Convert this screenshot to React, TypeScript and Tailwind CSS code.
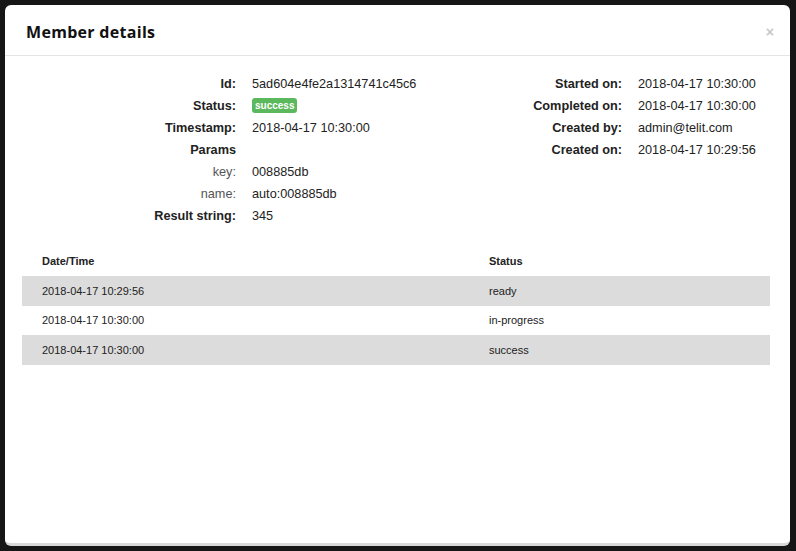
import React from "react";

const Row = ({ label, value, light }: { label: string; value: React.ReactNode; light?: boolean }) => (
  <>
    <div className={light ? "text-right text-[#555] font-normal" : "text-right font-bold text-[#222]"}>{label}</div>
    <div className="text-[#222]">{value}</div>
  </>
);

export default function App() {
  const hist = [
    ["2018-04-17 10:29:56", "ready", true],
    ["2018-04-17 10:30:00", "in-progress", false],
    ["2018-04-17 10:30:00", "success", true],
  ] as const;
  return (
    <div className="w-[796px] h-[551px] bg-[#161616] p-[5px] pr-[6px] pb-[5px] overflow-hidden" style={{ fontFamily: '"Liberation Sans", Arial, sans-serif' }}>
      <div className="h-[541px] bg-white rounded-[6px] border-b-[3px] border-[#d9d9d9] flex flex-col">
        <div className="h-[51px] border-b border-[#e5e5e5] flex items-center justify-between pl-[21px] pr-[16px] pt-[3px]">
          <h1 className="text-[16px] font-bold text-[#111] tracking-[0.3px]" style={{ fontFamily: '"Open Sans", sans-serif' }}>Member details</h1>
          <span className="text-[#c8c8c8] text-[14px] font-bold leading-none">×</span>
        </div>
        <div className="pl-[17px] pr-[20px] pt-[17px]">
          <div className="flex text-[12.7px] leading-[22px]">
            <div className="w-[400px] grid grid-cols-[214px_1fr] gap-x-[16px]">
              <Row label="Id:" value="5ad604e4fe2a1314741c45c6" />
              <Row
                label="Status:"
                value={
                  <span className="inline-block bg-[#5cb85c] text-white text-[10px] font-bold leading-[15px] px-[3px] rounded-[3px] align-middle relative top-[-1px]">success</span>
                }
              />
              <Row label="Timestamp:" value="2018-04-17 10:30:00" />
              <Row label="Params" value="" />
              <Row label="key:" value="008885db" light />
              <Row label="name:" value="auto:008885db" light />
              <Row label="Result string:" value="345" />
            </div>
            <div className="grid grid-cols-[200px_1fr] gap-x-[16px] content-start">
              <Row label="Started on:" value="2018-04-17 10:30:00" />
              <Row label="Completed on:" value="2018-04-17 10:30:00" />
              <Row label="Created by:" value="admin@telit.com" />
              <Row label="Created on:" value="2018-04-17 10:29:56" />
            </div>
          </div>
          <div className="mt-[19px] text-[11px] text-[#222]">
            <div className="flex h-[30px] items-center font-bold">
              <div className="w-[467px] pl-[20px]">Date/Time</div>
              <div>Status</div>
            </div>
            {hist.map(([d, s, g], i) => (
              <div key={i} className={(g ? "bg-[#dcdcdc] " : "bg-white ") + "flex h-[29.5px] items-center"}>
                <div className="w-[467px] pl-[20px]">{d}</div>
                <div>{s}</div>
              </div>
            ))}
          </div>
        </div>
      </div>
    </div>
  );
}
